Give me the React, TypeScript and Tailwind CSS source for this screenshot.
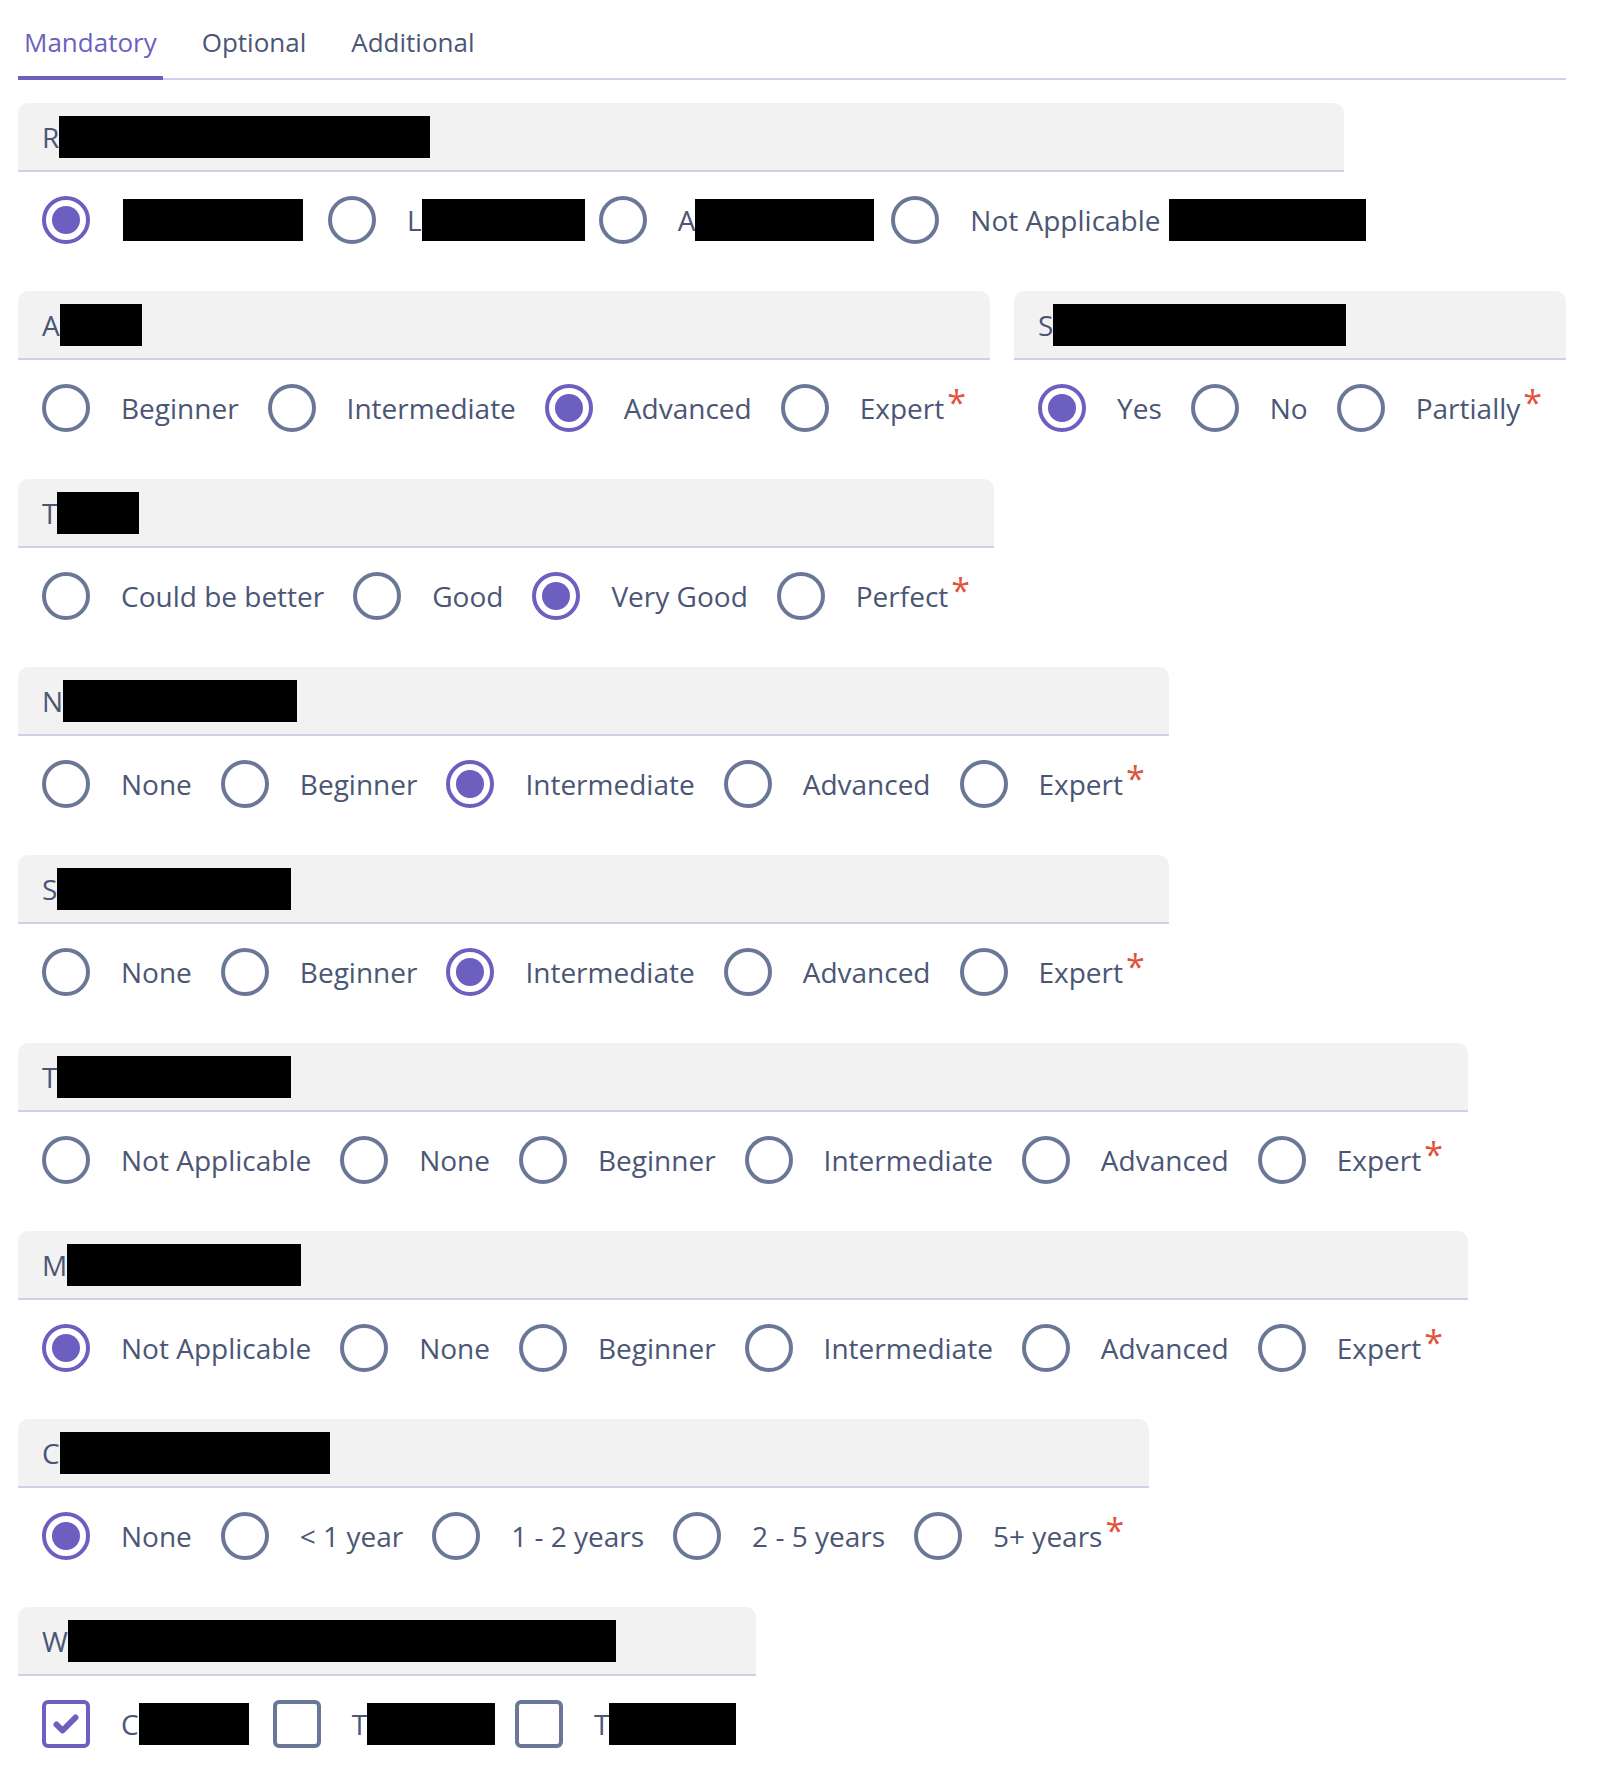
import React from 'react';

type Opt = {
  label?: string;
  prefix?: string;
  box?: string;
  tail?: string;
  after?: string;
  checked?: boolean;
};

type Section = {
  letter: string;
  box: string;
  width: string;
  kind?: 'radio' | 'check';
  required?: boolean;
  options: Opt[];
};

const Redact: React.FC<{ w: string; className?: string }> = ({ w, className = '' }) => (
  <span className={`inline-block h-[42px] bg-black shrink-0 ${w} ${className}`} />
);

const Radio: React.FC<{ checked?: boolean }> = ({ checked }) => (
  <span
    className={`flex items-center justify-center w-12 h-12 shrink-0 rounded-full border-4 ${
      checked ? 'border-[#6c5fbf]' : 'border-[#6a7796]'
    }`}
  >
    {checked && <span className="w-7 h-7 rounded-full bg-[#6c5fbf]" />}
  </span>
);

const Check: React.FC<{ checked?: boolean }> = ({ checked }) => (
  <span
    className={`flex items-center justify-center w-12 h-12 shrink-0 rounded-[6px] border-4 ${
      checked ? 'border-[#6c5fbf]' : 'border-[#6a7796]'
    }`}
  >
    {checked && (
      <svg viewBox="0 0 28 22" className="w-7 h-[22px]" fill="none">
        <path d="M4.5 11.5l6 6L23.5 4.5" stroke="#6c5fbf" strokeWidth="6" strokeLinecap="round" strokeLinejoin="round" />
      </svg>
    )}
  </span>
);

const levels = ['None', 'Beginner', 'Intermediate', 'Advanced', 'Expert'];
const wideLevels = ['Not Applicable', ...levels];

const sections: Section[][] = [
  [
    {
      letter: 'R',
      box: 'w-[371px]',
      width: 'w-[1326px]',
      options: [
        { checked: true, box: 'w-[180px] ml-[2px]', tail: '-mr-[4px]' },
        { prefix: 'L', box: 'w-[163px]', tail: '-mr-[15px]' },
        { prefix: 'A', box: 'w-[179px]', tail: '-mr-[12px]' },
        { label: 'Not Applicable', after: 'w-[197px]' },
      ],
    },
  ],
  [
    {
      letter: 'A',
      box: 'w-[82px]',
      width: 'w-[972px]',
      required: true,
      options: ['Beginner', 'Intermediate', 'Advanced', 'Expert'].map((l) => ({ label: l, checked: l === 'Advanced' })),
    },
    {
      letter: 'S',
      box: 'w-[293px]',
      width: 'w-[552px]',
      required: true,
      options: ['Yes', 'No', 'Partially'].map((l) => ({ label: l, checked: l === 'Yes' })),
    },
  ],
  [
    {
      letter: 'T',
      box: 'w-[82px]',
      width: 'w-[976px]',
      required: true,
      options: ['Could be better', 'Good', 'Very Good', 'Perfect'].map((l) => ({ label: l, checked: l === 'Very Good' })),
    },
  ],
  [
    {
      letter: 'N',
      box: 'w-[234px]',
      width: 'w-[1151px]',
      required: true,
      options: levels.map((l) => ({ label: l, checked: l === 'Intermediate' })),
    },
  ],
  [
    {
      letter: 'S',
      box: 'w-[234px]',
      width: 'w-[1151px]',
      required: true,
      options: levels.map((l) => ({ label: l, checked: l === 'Intermediate' })),
    },
  ],
  [
    {
      letter: 'T',
      box: 'w-[234px]',
      width: 'w-[1450px]',
      required: true,
      options: wideLevels.map((l) => ({ label: l })),
    },
  ],
  [
    {
      letter: 'M',
      box: 'w-[234px]',
      width: 'w-[1450px]',
      required: true,
      options: wideLevels.map((l) => ({ label: l, checked: l === 'Not Applicable' })),
    },
  ],
  [
    {
      letter: 'C',
      box: 'w-[270px]',
      width: 'w-[1131px]',
      required: true,
      options: ['None', '< 1 year', '1 - 2 years', '2 - 5 years', '5+ years'].map((l) => ({ label: l, checked: l === 'None' })),
    },
  ],
  [
    {
      letter: 'W',
      box: 'w-[548px]',
      width: 'w-[738px]',
      kind: 'check',
      options: [
        { checked: true, prefix: 'C', box: 'w-[110px]', tail: '-mr-[5px]' },
        { prefix: 'T', box: 'w-[128px]', tail: '-mr-[9px]' },
        { prefix: 'T', box: 'w-[127px]' },
      ],
    },
  ],
];

const Field: React.FC<{ s: Section }> = ({ s }) => (
  <div className={`flex flex-col shrink-0 ${s.width}`}>
    <div className="flex items-center h-[69px] px-6 rounded-t-[10px] bg-[#f2f2f2] border-b-2 border-[#d3cfe8]">
      <span>{s.letter}</span>
      <Redact w={s.box} />
    </div>
    <div className="flex items-center gap-[29px] pt-6 px-6 whitespace-nowrap">
      {s.options.map((o, i) => (
        <div key={i} className={`flex items-center ${o.tail ?? ''}`}>
          {s.kind === 'check' ? <Check checked={o.checked} /> : <Radio checked={o.checked} />}
          <span className="flex items-center ml-[31px]">
            {o.label && <span>{o.label}</span>}
            {o.prefix && <span>{o.prefix}</span>}
            {o.box && <Redact w={o.box} />}
            {o.after && <Redact w={o.after} className="ml-2" />}
            {s.required && i === s.options.length - 1 && (
              <span className="self-start ml-[3px] -mt-[2px] text-[34px] leading-none text-[#e0533d]">*</span>
            )}
          </span>
        </div>
      ))}
    </div>
  </div>
);

export default function App() {
  return (
    <div className="min-h-screen bg-white pl-[18px] text-[28px] text-[#4b5675]" style={{ fontFamily: '"Open Sans", "Noto Sans", sans-serif' }}>
      <div className="flex gap-[33px] w-[1548px] border-b-2 border-[#d3cfe8] text-[26px]">
        <div className="-mb-[2px] px-[6px] pt-6 pb-4 border-b-4 border-[#6c5fbf] text-[#6c5fbf] leading-9">Mandatory</div>
        <div className="-mb-[2px] px-[6px] pt-6 pb-4 border-b-4 border-transparent leading-9">Optional</div>
        <div className="-mb-[2px] px-[6px] pt-6 pb-4 border-b-4 border-transparent leading-9">Additional</div>
      </div>
      <div className="flex flex-col gap-[47px] mt-[23px]">
        {sections.map((row, i) => (
          <div key={i} className="flex gap-6">
            {row.map((s, j) => (
              <Field key={j} s={s} />
            ))}
          </div>
        ))}
      </div>
    </div>
  );
}
